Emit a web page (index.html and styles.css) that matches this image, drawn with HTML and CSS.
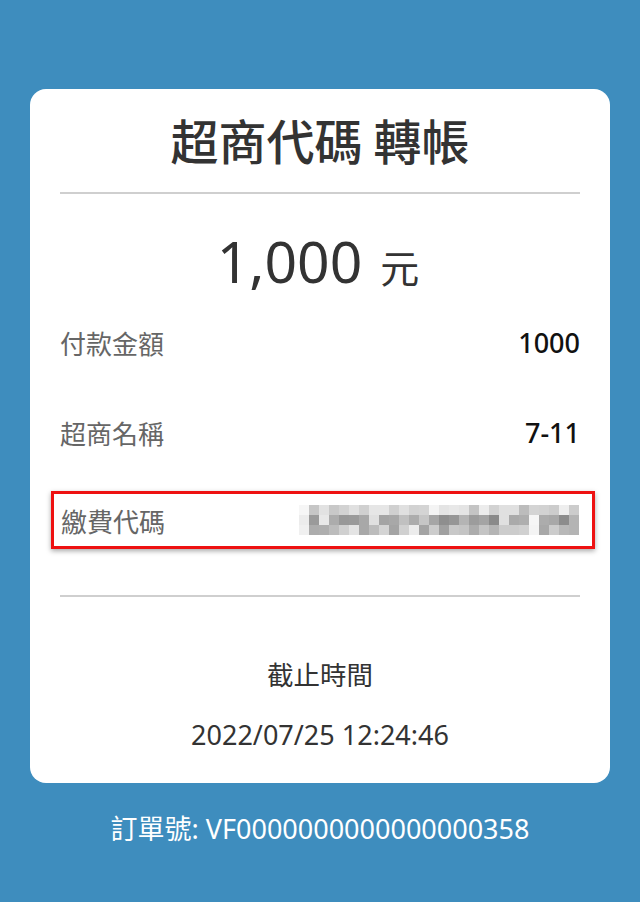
FILE: index.html
```html
<!DOCTYPE html>
<html lang="zh-Hant">
<head>
<meta charset="utf-8">
<title>超商代碼 轉帳</title>
<link rel="stylesheet" href="styles.css">
</head>
<body>
<main class="page">
  <section class="card">
    <h1 class="title">超商代碼 轉帳</h1>
    <hr class="divider">
    <div class="amount"><span class="amount-num">1,000</span><span class="amount-unit">元</span></div>
    <div class="row">
      <span class="label">付款金額</span>
      <span class="value">1000</span>
    </div>
    <div class="row">
      <span class="label">超商名稱</span>
      <span class="value">7-11</span>
    </div>
    <div class="row row-highlight">
      <span class="label">繳費代碼</span>
      <span class="mosaic" aria-label="已遮蔽">
        <i style="background:#f6f6f6"></i><i style="background:#c6c6c6"></i><i style="background:#e2e2e2"></i><i style="background:#c8c8c8"></i><i style="background:#d2d2d2"></i><i style="background:#e0e0e0"></i><i style="background:#d0d0d0"></i><i style="background:#e6e6e6"></i><i style="background:#e6e6e6"></i><i style="background:#d0d0d0"></i><i style="background:#e0e0e0"></i><i style="background:#d2d2d2"></i><i style="background:#d4d4d4"></i><i style="background:#f4f4f4"></i><i style="background:#e4e4e4"></i><i style="background:#e8e8e8"></i><i style="background:#e4e4e4"></i><i style="background:#c4c4c4"></i><i style="background:#ececec"></i><i style="background:#d2d2d2"></i><i style="background:#e0e0e0"></i><i style="background:#e0e0e0"></i><i style="background:#bcbcbc"></i><i style="background:#d4d4d4"></i><i style="background:#d2d2d2"></i><i style="background:#cccccc"></i><i style="background:#eeeeee"></i><i style="background:#cccccc"></i>
        <i style="background:#ececec"></i><i style="background:#9a9a9a"></i><i style="background:#e8e8e8"></i><i style="background:#acacac"></i><i style="background:#989898"></i><i style="background:#9a9a9a"></i><i style="background:#a8a8a8"></i><i style="background:#e0e0e0"></i><i style="background:#a4a4a4"></i><i style="background:#a8a8a8"></i><i style="background:#c0c0c0"></i><i style="background:#acacac"></i><i style="background:#c6c6c6"></i><i style="background:#a6a6a6"></i><i style="background:#8e8e8e"></i><i style="background:#969696"></i><i style="background:#b4b4b4"></i><i style="background:#9c9c9c"></i><i style="background:#a4a4a4"></i><i style="background:#8a8a8a"></i><i style="background:#e0e0e0"></i><i style="background:#aaaaaa"></i><i style="background:#aeaeae"></i><i style="background:#f6f6f6"></i><i style="background:#acacac"></i><i style="background:#a8a8a8"></i><i style="background:#8c8c8c"></i><i style="background:#b4b4b4"></i>
        <i style="background:#f0f0f0"></i><i style="background:#acacac"></i><i style="background:#aeaeae"></i><i style="background:#bcbcbc"></i><i style="background:#d0d0d0"></i><i style="background:#e4e4e4"></i><i style="background:#a8a8a8"></i><i style="background:#bcbcbc"></i><i style="background:#d4d4d4"></i><i style="background:#a4a4a4"></i><i style="background:#d0d0d0"></i><i style="background:#ececec"></i><i style="background:#a4a4a4"></i><i style="background:#cccccc"></i><i style="background:#a0a0a0"></i><i style="background:#c8c8c8"></i><i style="background:#c4c4c4"></i><i style="background:#acacac"></i><i style="background:#c4c4c4"></i><i style="background:#b4b4b4"></i><i style="background:#cccccc"></i><i style="background:#cccccc"></i><i style="background:#d0d0d0"></i><i style="background:#f4f4f4"></i><i style="background:#a8a8a8"></i><i style="background:#cccccc"></i><i style="background:#b8b8b8"></i><i style="background:#b4b4b4"></i>
      </span>
    </div>
    <hr class="divider divider-lower">
    <div class="deadline-label">截止時間</div>
    <div class="deadline-time">2022/07/25 12:24:46</div>
  </section>
  <p class="order">訂單號: VF0000000000000000358</p>
</main>
</body>
</html>
```

FILE: styles.css
```css
* {
  box-sizing: border-box;
}

html, body {
  margin: 0;
  padding: 0;
}

body {
  background: #3e8dbe;
  font-family: "Noto Sans", "Noto Sans CJK TC", sans-serif;
  width: 640px;
  height: 902px;
  overflow: hidden;
}

.page {
  padding: 89px 30px 0;
}

.card {
  background: #ffffff;
  border-radius: 16px;
  padding: 0 30px 28px;
}

.title {
  margin: 0;
  height: 100px;
  line-height: 100px;
  text-align: center;
  font-size: 48px;
  font-weight: 500;
  color: #333333;
  font-family: "Noto Sans CJK TC", sans-serif;
}

.divider {
  margin: 3px 0 0;
  border: 0;
  height: 2px;
  background: #cfcfcf;
}

.amount {
  margin-top: 31px;
  height: 72px;
  line-height: 72px;
  text-align: center;
  color: #333333;
  padding-right: 4px;
}

.amount-num {
  font-size: 57px;
}

.amount-unit {
  margin-left: 18px;
  font-size: 39px;
  font-family: "Noto Sans CJK TC", sans-serif;
}

.row {
  display: flex;
  align-items: center;
  justify-content: space-between;
  height: 90px;
}

.label {
  font-size: 26px;
  color: #666666;
  font-family: "Noto Sans CJK TC", sans-serif;
}

.value {
  font-size: 27px;
  font-weight: 500;
  color: #111111;
}

.row-highlight {
  margin: 14px -15px 0 -9px;
  height: 58px;
  padding: 0 13px 0 7px;
  border: 3px solid #ee1111;
  box-shadow: 0 2px 5px rgba(0, 0, 0, 0.35);
}

.mosaic {
  display: grid;
  grid-template-columns: repeat(28, 10px);
  grid-auto-rows: 10px;
}

.mosaic i {
  display: block;
}

.divider-lower {
  margin-top: 46px;
}

.deadline-label {
  margin-top: 57px;
  line-height: 40px;
  text-align: center;
  font-size: 26.5px;
  color: #333333;
  font-family: "Noto Sans CJK TC", sans-serif;
}

.deadline-time {
  margin-top: 21px;
  line-height: 40px;
  text-align: center;
  font-size: 27px;
  color: #333333;
}

.order {
  margin: 26px 0 0;
  line-height: 40px;
  text-align: center;
  font-size: 27px;
  color: #ffffff;
}
```
